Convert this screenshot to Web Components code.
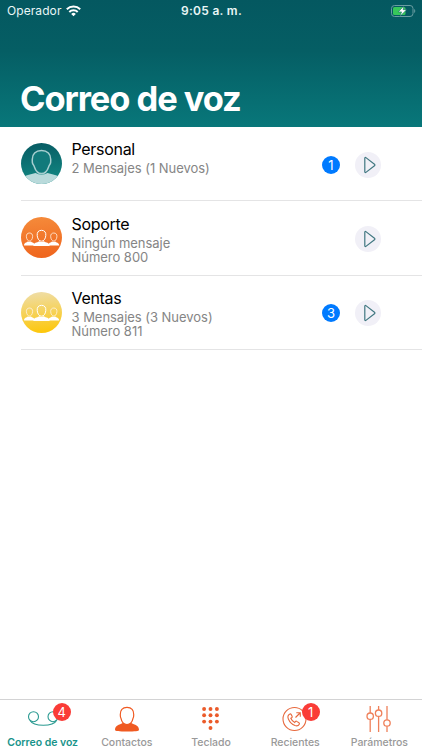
<!DOCTYPE html>
<html lang="es">
<head>
<meta charset="utf-8">
<title>Correo de voz</title>
<style>
html, body { margin: 0; height: 100%; background: #fff; }
body { font-family: Inter, "Liberation Sans", sans-serif; }
</style>
</head>
<body>
<voicemail-app></voicemail-app>
<script>
class Base extends HTMLElement {
  constructor() {
    super();
    this.attachShadow({ mode: "open" });
  }
  connectedCallback() { this.shadowRoot.innerHTML = this.render(); }
}

customElements.define("status-bar", class extends Base {
  render() {
    return `<style>
      :host { display: grid; grid-template-columns: 1fr auto 1fr; align-items: center; height: 22px; padding: 0 6px 0 7px; color: #e9f6f6; font-size: 12px; line-height: 22px; }
      .left { display: flex; align-items: center; gap: 5px; letter-spacing: .08px; }
      .time { font-weight: 600; letter-spacing: .3px; }
      .battery { justify-self: end; }
      svg { display: block; }
    </style>
    <div class="left"><span>Operador</span>
      <svg width="15" height="12" viewBox="0 0 15 12" fill="none" stroke="#fff" stroke-width="2"><path d="M.8 4.3a9.6 9.6 0 0 1 13.400 0M3.300 7a6 6 0 0 1 8.400 0"/><path d="M5.200 8.900a3.300 3.300 0 0 1 4.600 0L7.500 11.300z" fill="#fff" stroke="none"/></svg>
    </div>
    <div class="time">9:05 a. m.</div>
    <svg class="battery" width="25" height="12" viewBox="0 0 25 12"><rect x=".5" y=".5" width="21.500" height="11" rx="3" fill="none" stroke="#6a9da2"/><rect x="2" y="2" width="12.500" height="8" rx="1.500" fill="#37c75a"/><path d="M23.200 4v4c1.400-.6 1.400-3.400 0-4z" fill="#6a9da2"/><path d="M12.800 1 7.300 6.900h3.300L9 11.300l6.600-6.600h-3.500z" fill="#fff" stroke="#075d62" stroke-width=".5"/></svg>`;
  }
});

customElements.define("page-header", class extends Base {
  render() {
    return `<style>
      :host { display: flex; flex-direction: column; justify-content: space-between; height: 127px; background: linear-gradient(#045860, #055e64 40%, #08777a); }
      h1 { margin: 0; padding: 0 20px 6.500px; color: #fff; font-size: 34.500px; line-height: 44px; font-weight: 700; letter-spacing: -1.080px; white-space: nowrap; }
    </style><status-bar></status-bar><h1><slot></slot></h1>`;
  }
});

customElements.define("user-avatar", class extends Base {
  render() {
    const kind = this.getAttribute("kind");
    const colors = { personal: ["#075c64", "#128a84"], soporte: ["#f58a3a", "#ef651d"], ventas: ["#efdda6", "#fdc70a"] }[kind];
    const person = `<circle cx="20.500" cy="20.500" r="20.500" fill="url(#g)"/><g clip-path="url(#c)"><path d="M1 36c3-4.500 8.500-4.300 13.500-6 4 2 8 2 12 0 5 1.700 10.500 1.500 13.500 6v7H1z" fill="#b9dadb"/><path d="M20.500 7.600c-6 0-9.300 3.600-9.200 8.600 0 2-.3 3.300.5 4.700.7 1.300 1.200 1.800 1.700 3.300 1.300 4 4 6.300 7 6.300s5.700-2.300 7-6.300c.5-1.500 1-2 1.700-3.300.8-1.400.5-2.700.5-4.700.1-5-3.200-8.600-9.200-8.600z" fill="#117a7b" stroke="#a7cfd0" stroke-width="1.500"/></g>`;
    const small = (x) => `<g transform="translate(${x} 16)"><path d="M0 0c-2.200 0-3.300 1.500-3.100 3.700C-2.900 6.400-1.600 8 0 8s2.900-1.600 3.100-4.300C3.300 1.500 2.200 0 0 0z" fill="none" stroke="#fff3e4" stroke-width=".8"/><path d="M-5.500 12.400c.2-3 2.500-2.900 3.900-4 .9.600 1.900.6 2.800 0 1.400 1.100 3.800 1 4.300 4z" fill="#fff"/></g>`;
    const group = `<circle cx="20.500" cy="20.500" r="20.500" fill="url(#g)"/>${small(8.5)}${small(32.8)}<path d="M20.500 13.300c-3.300 0-4.600 2.300-4.300 5.200.3 3.500 2 5.700 4.300 5.700s4-2.200 4.300-5.700c.3-2.900-1-5.200-4.300-5.200z" fill="none" stroke="#fff" stroke-width="1"/><path d="M12.300 29.100c.3-3.700 3.700-3.400 5.900-4.900 1.500.9 3.100.9 4.600 0 2.200 1.500 5.600 1.200 5.900 4.900z" fill="#fff"/>`;
    return `<style>:host { display: block; width: 41px; height: 41px; } svg { display: block; }</style>
    <svg width="41" height="41" viewBox="0 0 41 41"><defs><linearGradient id="g" x1=".4" y1="0" x2=".5" y2="1"><stop stop-color="${colors[0]}"/><stop offset="1" stop-color="${colors[1]}"/></linearGradient><clipPath id="c"><circle cx="20.500" cy="20.500" r="20.500"/></clipPath></defs>${kind === "personal" ? person : group}</svg>`;
  }
});

customElements.define("count-badge", class extends Base {
  render() {
    return `<style>
      :host { display: block; box-sizing: border-box; width: 18px; height: 18px; border-radius: 50%; background: var(--badge, #007aff); color: #fff; font-size: 13px; line-height: 18px; text-align: center; }
    </style><slot></slot>`;
  }
});

customElements.define("play-button", class extends Base {
  render() {
    return `<style>
      :host { display: grid; place-items: center; width: 26px; height: 26px; border-radius: 50%; background: #f1f0f7; }
    </style><svg width="26" height="26" viewBox="0 0 26 26"><path d="M9.800 6.200v13.600c0 .7.600 1 1.100.6l8.600-6.700c.5-.4.500-1 0-1.400l-8.600-6.700c-.5-.4-1.100-.1-1.100.6z" fill="none" stroke="#407780" stroke-width="1.200"/></svg>`;
  }
});

customElements.define("mailbox-row", class extends Base {
  render() {
    const n = this.getAttribute("count");
    return `<style>
      :host { display: grid; grid-template-columns: 41px 1fr auto; height: 74.400px; margin-left: 20.500px; padding-right: 41px; box-sizing: border-box; border-bottom: 1px solid #e4e4e5; }
      user-avatar { margin-top: 16px; }
      .text { margin-left: 10px; white-space: nowrap; }
      .name { margin-top: 12.400px; font-size: 16px; line-height: 20px; color: #000; letter-spacing: -.3px; }
      .detail { margin-top: 2px; display: grid; grid-auto-rows: 14.300px; font-size: 13px; line-height: 14.300px; color: #858585; letter-spacing: -.03px; }
      .actions { display: flex; align-items: center; gap: 15px; height: 26px; margin-top: 24.700px; }
    </style>
    <user-avatar kind="${this.getAttribute("kind")}"></user-avatar>
    <div class="text"><div class="name">${this.getAttribute("name")}</div><div class="detail"><slot></slot></div></div>
    <div class="actions">${n ? `<count-badge>${n}</count-badge>` : ""}<play-button></play-button></div>`;
  }
});

const ICONS = {
  voicemail: `<g fill="none" stroke="#2a9a91" stroke-width="1.100"><circle cx="10.500" cy="16.700" r="5"/><circle cx="30" cy="16.700" r="5"/><path d="M6.800 20.200c4 6.800 23 6.800 27 0"/></g>`,
  contacts: `<path d="M8 30c0-4.800 3.800-5 8.500-7.300 2 1.600 5 1.600 7 0C28.200 25 32 25.200 32 30c0 1-4 1.600-12 1.600S8 31 8 30z" fill="#f05a22"/><path d="M20 7.400c-4.700 0-6.800 2.800-6.700 7 0 1.800-.1 2.800.7 4 .8 4 3.200 6.200 6 6.200s5.200-2.200 6-6.200c.8-1.200.7-2.200.7-4 .1-4.200-2-7-6.700-7z" fill="#fff" stroke="#f05a22" stroke-width="1.200"/>`,
  keypad: `<g fill="#eb5b2a">${[9, 15.3, 21.6].map(y => [13.1, 19.5, 25.9].map(x => `<circle cx="${x}" cy="${y}" r="1.950"/>`).join("")).join("")}<circle cx="19.500" cy="28" r="1.950"/></g>`,
  recent: `<g fill="none" stroke="#e7693e" stroke-width="1.100"><circle cx="19.500" cy="19" r="11.500"/><path d="M14.500 14.200c-1.700 1-2 2.800-1 5.100 1.300 3 3.600 5.200 6.500 6.300 2 .7 3.500.2 4.300-1.400.4-.7.200-1.100-.4-1.500l-2.100-1.300c-.6-.4-1.100-.2-1.500.3l-.6.8c-1.800-.8-3.100-2.300-3.900-4.200l.9-.6c.6-.4.7-.9.400-1.500l-1-1.800c-.4-.6-.9-.6-1.600-.2zM20.500 17.500l4.500-4.500m-3.700-.2h4v4"/></g>`,
  settings: `<g fill="none" stroke="#ef805a" stroke-width="1.300"><path d="M11.200 6v7M11.200 19.300V32M19.600 6v4M19.600 16.400V32M28 6v13.800M28 26.200V32"/><circle cx="11.200" cy="16.200" r="3.200"/><circle cx="19.600" cy="13.200" r="3.200"/><circle cx="28" cy="23" r="3.200"/></g>`
};

customElements.define("tab-item", class extends Base {
  render() {
    const n = this.getAttribute("count");
    return `<style>
      :host { display: flex; flex-direction: column; align-items: center; position: relative; color: #999; font-size: 10.500px; font-weight: 500; line-height: 14px; letter-spacing: -.03px; white-space: nowrap; }
      :host([active]) { color: #18938a; font-weight: 600; }
      svg { display: block; margin-bottom: 1px; }
      count-badge { position: absolute; left: calc(50% + var(--badge-x, 10px)); top: 3px; --badge: #fa3c37; font-weight: 400; letter-spacing: 0; }
      :host([icon="recent"]) { --badge-x: 6.500px; }
    </style><svg width="40" height="35" viewBox="0 0 40 35">${ICONS[this.getAttribute("icon")]}</svg><span><slot></slot></span>${n ? `<count-badge>${n}</count-badge>` : ""}`;
  }
});

customElements.define("tab-bar", class extends Base {
  render() {
    return `<style>
      :host { display: grid; grid-template-columns: repeat(5, 84.200px); justify-content: center; height: 51px; box-sizing: border-box; border-top: 1px solid #d3d3d4; background: #fff; }
    </style><slot></slot>`;
  }
});

customElements.define("voicemail-app", class extends Base {
  render() {
    return `<style>
      :host { display: flex; flex-direction: column; width: 422px; height: 750px; overflow: hidden; background: #fff; }
      main { flex: 1; }
    </style>
    <page-header>Correo de voz</page-header>
    <main>
      <mailbox-row kind="personal" name="Personal" count="1"><span>2 Mensajes (1 Nuevos)</span></mailbox-row>
      <mailbox-row kind="soporte" name="Soporte"><span>Ningún mensaje</span><span>Número 800</span></mailbox-row>
      <mailbox-row kind="ventas" name="Ventas" count="3"><span>3 Mensajes (3 Nuevos)</span><span>Número 811</span></mailbox-row>
    </main>
    <tab-bar>
      <tab-item icon="voicemail" count="4" active>Correo de voz</tab-item>
      <tab-item icon="contacts">Contactos</tab-item>
      <tab-item icon="keypad">Teclado</tab-item>
      <tab-item icon="recent" count="1">Recientes</tab-item>
      <tab-item icon="settings">Parámetros</tab-item>
    </tab-bar>`;
  }
});
</script>
</body>
</html>
